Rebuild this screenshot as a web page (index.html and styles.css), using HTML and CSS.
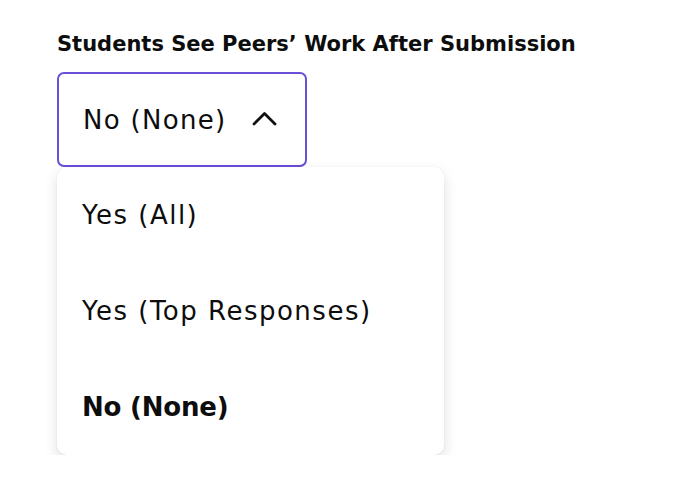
FILE: index.html
```html
<!DOCTYPE html>
<html lang="en">
<head>
<meta charset="UTF-8">
<meta name="viewport" content="width=device-width, initial-scale=1.0">
<title>Peer Work Setting</title>
<link rel="stylesheet" href="styles.css">
</head>
<body>
<div class="field">
    <label class="field-label">Students See Peers’ Work After Submission</label>
    <div class="select">
        <span class="select-value">No (None)</span>
        <svg class="chevron" width="25" height="15" viewBox="0 0 25 15">
            <path d="M2 13 L12.5 2.5 L23 13" fill="none" stroke="#111" stroke-width="2.8" stroke-linecap="round" stroke-linejoin="round"/>
        </svg>
    </div>
    <ul class="menu">
        <li>Yes (All)</li>
        <li>Yes (Top Responses)</li>
        <li class="selected">No (None)</li>
    </ul>
</div>
</body>
</html>
```

FILE: styles.css
```css
body {
    margin: 0;
    padding: 0;
    background-color: #fff;
    font-family: 'DejaVu Sans', 'Open Sans', sans-serif;
    color: #0d0d0d;
}
.field {
    padding: 30px 0 0 57px;
}
.field-label {
    display: block;
    font-size: 21px;
    font-weight: 700;
    line-height: 28px;
    margin-bottom: 14px;
}
.select {
    box-sizing: border-box;
    width: 250px;
    height: 95px;
    border: 2px solid #6a4fd8;
    border-radius: 7px;
    display: flex;
    align-items: center;
    padding: 0 28px 0 24px;
}
.select-value {
    font-size: 26px;
    letter-spacing: 1.3px;
}
.chevron {
    margin-left: auto;
    margin-top: -2px;
}
.menu {
    list-style: none;
    margin: 0;
    padding: 0;
    width: 387px;
    background-color: #fff;
    border-radius: 10px;
    box-shadow: 0 0 2px rgba(0, 0, 0, 0.07), 0 6px 14px rgba(0, 0, 0, 0.13);
}
.menu li {
    height: 96px;
    display: flex;
    align-items: center;
    padding-left: 25px;
    font-size: 26px;
    letter-spacing: 1.5px;
}
.menu li.selected {
    font-weight: 700;
    letter-spacing: -0.2px;
}
```
